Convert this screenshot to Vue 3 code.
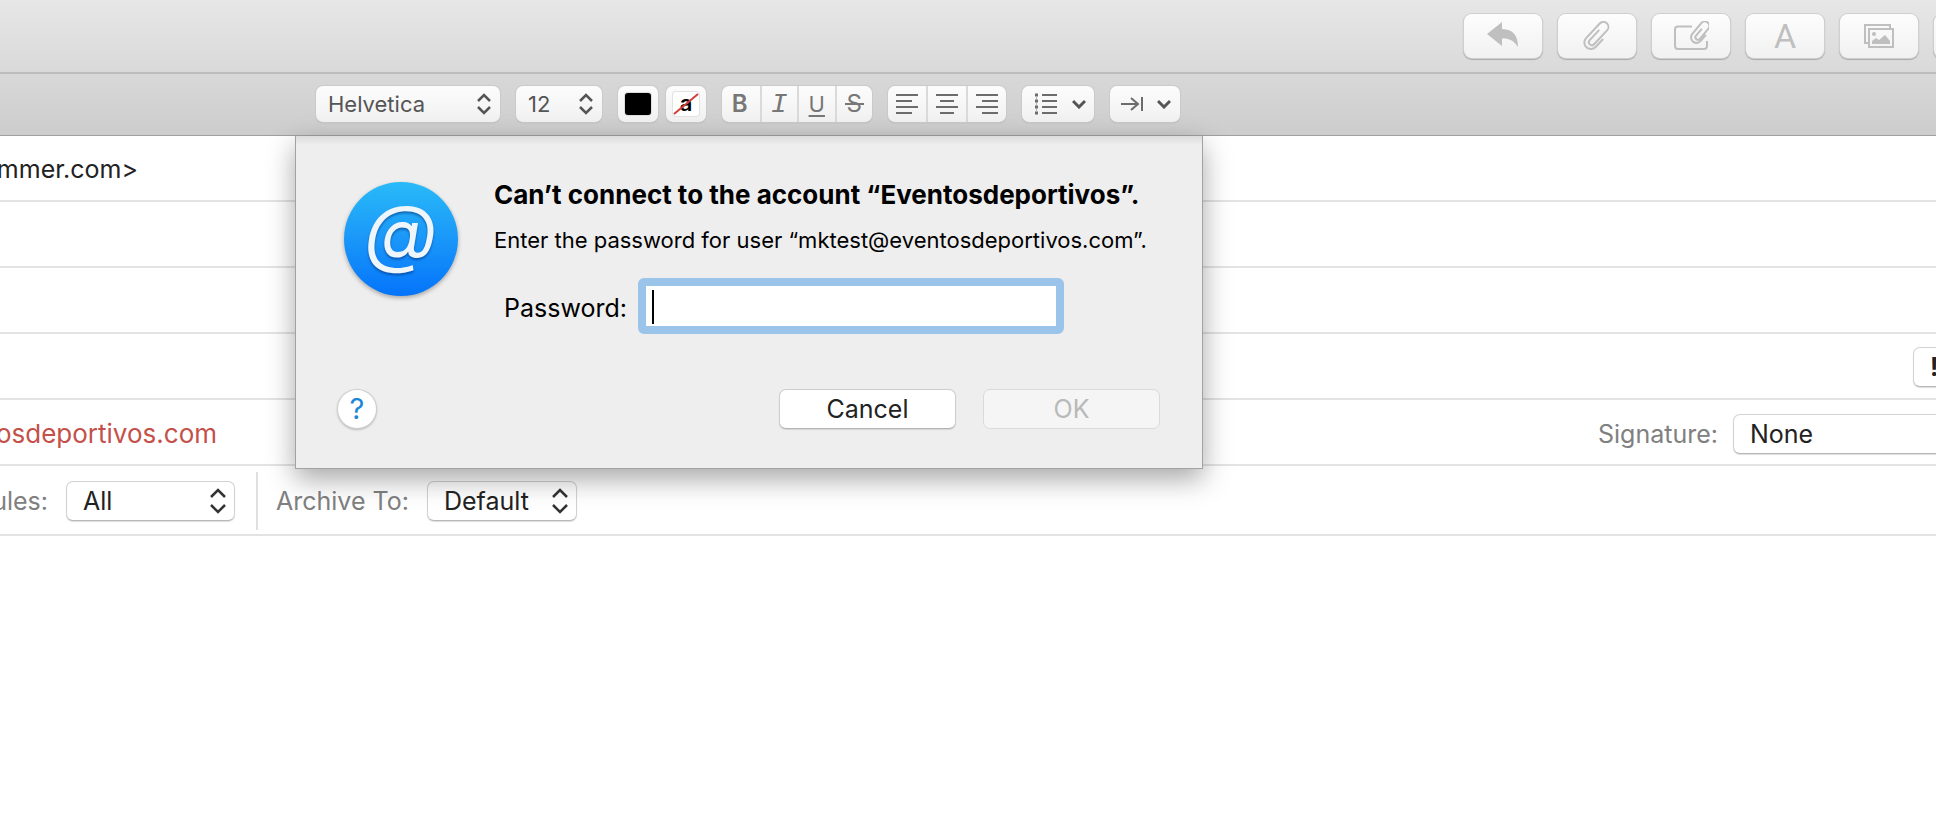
<script setup>
import { ref } from 'vue'

const font = ref('Helvetica')
const size = ref('12')
const rules = ref('All')
const archive = ref('Default')
const signature = ref('None')
const password = ref('')
</script>

<template>
  <main class="window">
    <header class="toolbar">
      <button class="tool" type="button" aria-label="Reply">
        <svg width="34" height="28" viewBox="0 0 34 28">
          <path d="M1 12 L16 0 V7 C27 7.500 32 13 32 25 C28 18.500 23 16 16 16.500 V24 Z" fill="#bfbfbf" />
        </svg>
      </button>
      <button class="tool" type="button" aria-label="Attach">
        <svg class="line" width="28" height="30" viewBox="0 0 28 30">
          <path transform="translate(14 15) rotate(43) translate(-6.500 -15)" d="M13 13 V24 A6.500 6.500 0 0 1 0 24 V4 A5 5 0 0 1 10 4 V23 A3 3 0 0 1 4 23 V9" />
        </svg>
      </button>
      <button class="tool" type="button" aria-label="Attach from message">
        <svg class="line" width="36" height="30" viewBox="0 0 36 30">
          <path d="M19 5.500 H5 Q2 5.500 2 8.500 V25 Q2 28 5 28 H31 Q34 28 34 25 V20" />
          <path transform="translate(27 11.500) rotate(40) translate(-5 -12)" d="M11 10 V18 A5.500 5.500 0 0 1 0 18 V4 A4.500 4.500 0 0 1 9 4 V17 A2.500 2.500 0 0 1 4 17 V8" />
        </svg>
      </button>
      <button class="tool letter" type="button">A</button>
      <button class="tool" type="button" aria-label="Photos">
        <svg width="30" height="24" viewBox="0 0 30 24">
          <path d="M4 19 H1 V1 H26 V4" fill="none" stroke="#bfbfbf" stroke-width="2" />
          <rect x="5" y="5" width="24" height="18" fill="none" stroke="#bfbfbf" stroke-width="2" />
          <circle cx="10" cy="10" r="2" fill="#bfbfbf" />
          <path d="M8 20 V17 L12 14 L15 16 L21 11 L26 17 V20 Z" fill="#bfbfbf" />
        </svg>
      </button>
      <button class="tool" type="button" aria-label="More"></button>
    </header>

    <div class="formatbar">
      <span class="pick pick-font">
        <select v-model="font" aria-label="Font"><option>Helvetica</option></select>
        <svg class="updown" width="16" height="22" viewBox="0 0 16 22"><path d="M2 8 L8 2 L14 8 M2 14 L8 20 L14 14" /></svg>
      </span>
      <span class="pick pick-size">
        <select v-model="size" aria-label="Size"><option>12</option></select>
        <svg class="updown" width="16" height="22" viewBox="0 0 16 22"><path d="M2 8 L8 2 L14 8 M2 14 L8 20 L14 14" /></svg>
      </span>
      <div class="pair">
        <button class="fmt" type="button" aria-label="Text colour"><span class="swatch"></span></button>
        <button class="fmt" type="button" aria-label="Highlight colour">
          <span class="well">a
            <svg width="26" height="22" viewBox="0 0 26 22"><path d="M1 21 L25 1" stroke="#d0403b" stroke-width="2" /></svg>
          </span>
        </button>
      </div>
      <div class="group styles">
        <button class="bold" type="button">B</button>
        <button class="italic" type="button">I</button>
        <button class="under" type="button">U</button>
        <button class="strike" type="button">S</button>
      </div>
      <div class="group aligns">
        <button type="button" aria-label="Align left">
          <svg class="bars" width="22" height="20" viewBox="0 0 22 20"><path d="M0 1 H22 M0 7 H16 M0 13 H22 M0 19 H16" /></svg>
        </button>
        <button type="button" aria-label="Align centre">
          <svg class="bars" width="22" height="20" viewBox="0 0 22 20"><path d="M0 1 H22 M4 7 H18 M0 13 H22 M4 19 H18" /></svg>
        </button>
        <button type="button" aria-label="Align right">
          <svg class="bars" width="22" height="20" viewBox="0 0 22 20"><path d="M0 1 H22 M6 7 H22 M0 13 H22 M6 19 H22" /></svg>
        </button>
      </div>
      <button class="fmt menu" type="button" aria-label="List">
        <svg class="bars" width="22" height="22" viewBox="0 0 22 22">
          <path d="M7 2 H22 M7 8 H22 M7 14 H22 M7 20 H22" />
          <path d="M0 2 H3 M0 8 H3 M0 14 H3 M0 20 H3" stroke-width="3" />
          <path d="M1 5 H2 M1 11 H2 M1 17 H2" stroke-width="1" />
        </svg>
        <svg class="down" width="14" height="10" viewBox="0 0 14 10"><path d="M1 2 L7 8 L13 2" /></svg>
      </button>
      <button class="fmt menu indent" type="button" aria-label="Indent">
        <svg class="bars" width="22" height="16" viewBox="0 0 22 16"><path d="M0 8 H17 M10 2 L17 8 L10 14 M21 1 V15" /></svg>
        <svg class="down" width="14" height="10" viewBox="0 0 14 10"><path d="M1 2 L7 8 L13 2" /></svg>
      </button>
    </div>

    <section class="compose">
      <div class="row"><span class="tail tail-to">mmer.com&gt;</span></div>
      <div class="row"></div>
      <div class="row"></div>
      <div class="row ends">
        <button class="priority" type="button">!</button>
      </div>
      <div class="row ends from">
        <span class="tail tail-from">osdeportivos.com</span>
        <label class="caption" for="signature">Signature:</label>
        <span class="field field-signature">
          <select id="signature" v-model="signature"><option>None</option></select>
        </span>
      </div>
      <div class="row options">
        <label class="caption rules" for="rules">ules:</label>
        <span class="field field-rules">
          <select id="rules" v-model="rules"><option>All</option></select>
          <svg class="updown dark" width="18" height="26" viewBox="0 0 18 26"><path d="M2 9 L9 2 L16 9 M2 17 L9 24 L16 17" /></svg>
        </span>
        <span class="divider"></span>
        <label class="caption" for="archive">Archive To:</label>
        <span class="field field-archive">
          <select id="archive" v-model="archive"><option>Default</option></select>
          <svg class="updown dark" width="18" height="26" viewBox="0 0 18 26"><path d="M2 9 L9 2 L16 9 M2 17 L9 24 L16 17" /></svg>
        </span>
      </div>

      <form class="sheet" role="dialog" aria-labelledby="sheet-title" @submit.prevent>
        <div class="lead">
          <svg class="badge" width="116" height="120" viewBox="0 0 116 120" aria-hidden="true">
            <defs>
              <linearGradient id="disc" x1="0" y1="0" x2="0" y2="1">
                <stop offset="0" stop-color="#29baf8" />
                <stop offset="0.500" stop-color="#1a97f9" />
                <stop offset="1" stop-color="#0474fb" />
              </linearGradient>
            </defs>
            <circle class="disc" cx="58" cy="57" r="57" fill="url(#disc)" />
            <text class="at" x="58" y="77" text-anchor="middle">@</text>
          </svg>
          <div class="message">
            <h1 id="sheet-title">Can’t connect to the account “Eventosdeportivos”.</h1>
            <p>Enter the password for user “mktest@eventosdeportivos.com”.</p>
            <div class="entry">
              <label for="password">Password:</label>
              <span class="box">
                <input id="password" v-model="password" type="password" />
                <span class="caret"></span>
              </span>
            </div>
          </div>
        </div>
        <div class="actions">
          <button class="help" type="button">?</button>
          <button class="push" type="button">Cancel</button>
          <button class="push" type="submit" disabled>OK</button>
        </div>
      </form>
    </section>
  </main>
</template>

<style>
body {
  background: #fff;
}
</style>

<style scoped>
.window {
  min-height: 100vh;
  overflow: hidden;
  background: #fff;
  color: #222;
  font-family: Inter, "Liberation Sans", sans-serif;
  font-size: 25px;
  line-height: 32px;
}
.window * {
  box-sizing: border-box;
}
button,
select,
input {
  margin: 0;
  padding: 0;
  border: 0;
  color: inherit;
  font: inherit;
}
button {
  display: flex;
  align-items: center;
  justify-content: center;
}
svg {
  display: block;
  flex: none;
}
path {
  stroke-linejoin: miter;
}

.toolbar {
  display: flex;
  justify-content: flex-end;
  gap: 16px;
  height: 74px;
  padding-top: 14px;
  margin-right: -76px;
  border-bottom: 2px solid #bdbdbd;
  background: linear-gradient(#e7e7e7, #d9d9d9);
}
.tool {
  flex: none;
  width: 78px;
  height: 44px;
  border-radius: 8px;
  background: linear-gradient(#fdfdfd, #f1f1f1);
  box-shadow: 0 0 0 1px #cfcfcf, 0 1px 1px 1px #aaa;
}
.letter {
  color: #bfbfbf;
  font-family: Roboto, "Liberation Sans", sans-serif;
  font-size: 34px;
}
.line {
  fill: none;
  stroke: #bfbfbf;
  stroke-width: 2;
}

.formatbar {
  display: flex;
  gap: 16px;
  height: 62px;
  padding: 12px 0 0 316px;
  border-bottom: 1px solid #a0a0a0;
  background: linear-gradient(#d8d8d8, #cdcdcd);
}
.pick,
.fmt,
.group {
  flex: none;
  height: 36px;
  border-radius: 7px;
  background: linear-gradient(#fcfcfc, #f1f1f1);
  box-shadow: 0 0 0 1px #cacaca, 0 1px 1px #999;
}
.pick,
.field {
  display: flex;
  align-items: center;
}
select {
  flex: 1;
  min-width: 0;
  height: 100%;
  appearance: none;
  background: transparent;
}
.pick {
  padding: 0 8px 0 12px;
  color: #555;
  font-size: 22px;
}
.pick-font {
  width: 184px;
}
.pick-size {
  width: 86px;
}
.updown,
.down {
  fill: none;
  stroke: #555;
  stroke-width: 3;
}
.updown path {
  stroke-width: 2.500;
}
.dark {
  stroke: #333;
}
.pair {
  display: flex;
  gap: 8px;
}
.fmt {
  width: 40px;
}
.swatch {
  width: 26px;
  height: 22px;
  border-radius: 3px;
  background: #000;
  box-shadow: 0 0 0 1px #ddd;
}
.well {
  position: relative;
  width: 26px;
  height: 24px;
  border-radius: 3px;
  background: #fff;
  box-shadow: 0 0 0 1px #e2e2e2;
  color: #000;
  font-size: 22px;
  font-weight: 600;
  line-height: 22px;
}
.well svg {
  position: absolute;
  top: 1px;
  left: 0;
}
.group {
  display: flex;
  overflow: hidden;
}
.group button {
  flex: 1;
  background: transparent;
  color: #777;
  font-size: 24px;
}
.group button + button {
  border-left: 2px solid #dadada;
}
.styles {
  width: 150px;
}
.aligns {
  width: 118px;
}
.group .bold {
  padding-right: 2px;
  font-weight: 600;
}
.group .italic {
  padding-top: 2px;
  font-family: "Liberation Mono", monospace;
  font-size: 28px;
  font-style: italic;
}
.group .under {
  font-size: 22px;
  text-decoration: underline 2px;
  text-underline-offset: 3px;
}
.strike {
  position: relative;
}
.strike::after {
  position: absolute;
  top: 17px;
  right: 8px;
  left: 8px;
  height: 2px;
  background: #777;
  content: "";
}
.bars {
  fill: none;
  stroke: #6c6c6c;
  stroke-width: 2;
}
.menu {
  gap: 15px;
  width: 72px;
  padding-left: 4px;
}
.indent {
  gap: 14px;
  width: 70px;
  padding-left: 2px;
}

.compose {
  position: relative;
}
.row {
  display: flex;
  align-items: center;
  height: 66px;
  padding-top: 2px;
  border-bottom: 2px solid #e3e3e3;
}
.from {
  padding-top: 4px;
}
.tail {
  display: flex;
  justify-content: flex-end;
  white-space: nowrap;
}
.tail-to {
  width: 138px;
}
.tail-from {
  width: 217px;
  margin-right: auto;
  color: #c4504a;
  font-size: 26px;
}
.ends {
  justify-content: flex-end;
}
.caption {
  color: #808080;
  white-space: nowrap;
}
.field,
.priority {
  flex: none;
  height: 40px;
  padding: 0 7px 0 16px;
  border: 1px solid #d2d2d2;
  border-bottom-color: #b8b8b8;
  border-radius: 7px;
  background: #fff;
  box-shadow: 0 1px 1px #ddd;
}
.priority {
  justify-content: flex-start;
  width: 70px;
  margin-right: -47px;
  font-weight: 700;
}
.field-signature {
  width: 260px;
  margin: 0 -57px 0 15px;
}
.options {
  height: 70px;
}
.rules {
  display: flex;
  justify-content: flex-end;
  width: 48px;
}
.field-rules {
  width: 169px;
  margin-left: 18px;
}
.divider {
  width: 2px;
  height: 58px;
  margin: 0 18px 0 21px;
  background: #e0e0e0;
}
.field-archive {
  width: 150px;
  margin-left: 18px;
}

.sheet {
  position: absolute;
  top: 0;
  left: 295px;
  width: 908px;
  padding: 46px 42px 39px;
  border: 1px solid #a2a2a2;
  border-top: 0;
  background: linear-gradient(#dcdcdc, #eee 9px);
  box-shadow: 0 10px 26px rgba(0, 0, 0, 0.35);
  color: #000;
}
.lead {
  display: flex;
  gap: 35px;
  padding-left: 5px;
}
.badge {
  overflow: visible;
}
.disc {
  filter: drop-shadow(0 2px 2px rgba(0, 0, 0, 0.3));
}
.at {
  fill: #eef6fb;
  filter: drop-shadow(0 2px 1px rgba(0, 40, 110, 0.5));
  font-size: 75px;
  font-style: italic;
}
.message {
  padding-top: 1px;
  white-space: nowrap;
}
h1 {
  margin: -4px 0 0;
  font-size: 26px;
  font-weight: 700;
  line-height: 32px;
}
p {
  margin: 15px 0 0;
  font-size: 22px;
  line-height: 28px;
}
.entry {
  display: flex;
  align-items: center;
  margin-top: 24px;
  padding-left: 10px;
}
.entry label {
  padding-top: 3px;
}
.box {
  position: relative;
  margin-left: 11px;
}
.box input {
  display: block;
  width: 426px;
  height: 56px;
  padding: 0 6px;
  border: 8px solid #9bc4ea;
  border-radius: 6px;
  outline: 0;
  background: #fff;
}
.caret {
  position: absolute;
  top: 12px;
  left: 14px;
  width: 2px;
  height: 34px;
  background: #000;
}
.actions {
  display: flex;
  align-items: center;
  gap: 27px;
  margin-top: 55px;
}
.help {
  width: 38px;
  height: 38px;
  margin-right: auto;
  border-radius: 50%;
  background: #fff;
  box-shadow: 0 0 0 1px #d0d0d0, 0 1px 2px 1px #bbb;
  color: #1b87d6;
  font-size: 29px;
}
.push {
  width: 177px;
  height: 40px;
  border: 1px solid #cdcdcd;
  border-bottom-color: #b4b4b4;
  border-radius: 7px;
  background: #fff;
  box-shadow: 0 1px 1px #d4d4d4;
  color: #222;
}
.push:disabled {
  border-color: #dadada;
  background: #f5f5f5;
  box-shadow: none;
  color: #b9b9b9;
}
</style>
